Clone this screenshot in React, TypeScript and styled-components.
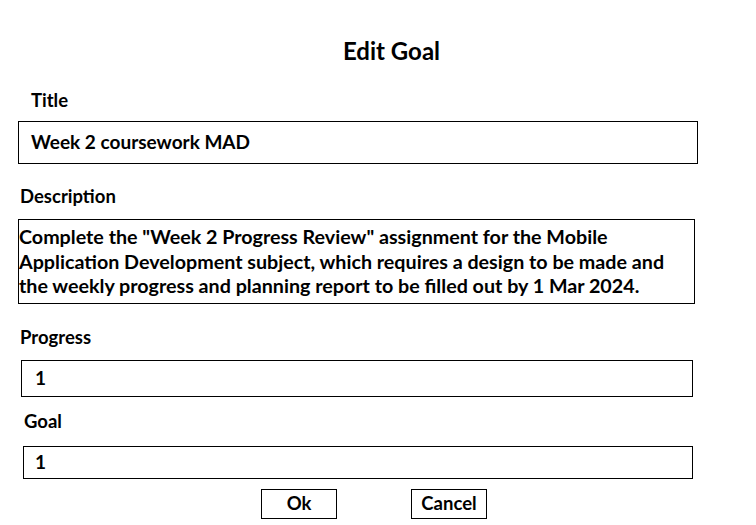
import React from "react";
import styled, { createGlobalStyle } from "styled-components";

const GlobalStyle = createGlobalStyle`
  html, body {
    margin: 0;
    padding: 0;
    background: #ffffff;
  }
  body {
    font-family: "Lato", "Noto Sans", sans-serif;
    font-weight: 700;
    color: #000000;
  }
`;

const Page = styled.div`
  width: 756px;
  height: 525px;
  box-sizing: border-box;
  padding-top: 36px;
  display: flex;
  flex-direction: column;
  overflow: hidden;
`;

const Heading = styled.h1`
  margin: 0;
  padding-left: 343px;
  font-size: 24px;
  line-height: 30px;
  font-weight: 700;
`;

const Label = styled.div<{ $indent: number; $gap: number }>`
  margin-top: ${(p) => p.$gap}px;
  padding-left: ${(p) => p.$indent}px;
  font-size: 18.5px;
  line-height: 22px;
`;

const Box = styled.div<{ $left: number; $width: number; $height: number; $gap: number; $pad: number }>`
  margin-top: ${(p) => p.$gap}px;
  margin-left: ${(p) => p.$left}px;
  width: ${(p) => p.$width}px;
  height: ${(p) => p.$height}px;
  box-sizing: border-box;
  border: 1px solid #000000;
  padding: 0 0 2px ${(p) => p.$pad}px;
  display: flex;
  align-items: center;
  font-size: 19px;
  line-height: 22px;
`;

const TextArea = styled.div`
  margin-top: 12px;
  margin-left: 18px;
  width: 677px;
  height: 85px;
  box-sizing: border-box;
  border: 1px solid #000000;
  padding: 5px 0 0 0;
  font-size: 19.7px;
  line-height: 24.5px;
  white-space: nowrap;
`;

const Line = styled.span`
  display: block;
`;

const ButtonRow = styled.div`
  margin-top: 10px;
  padding-left: 261px;
  display: flex;
  gap: 74px;
`;

const Button = styled.button`
  width: 76px;
  height: 30px;
  box-sizing: border-box;
  border: 1px solid #000000;
  background: #ffffff;
  border-radius: 0;
  padding: 0 0 3px 0;
  margin: 0;
  font-family: "Lato", "Noto Sans", sans-serif;
  font-weight: 700;
  font-size: 18.5px;
  line-height: 22px;
  color: #000000;
  display: flex;
  align-items: center;
  justify-content: center;
`;

const descriptionLines = [
  'Complete the "Week 2 Progress Review" assignment for the Mobile',
  "Application Development subject, which requires a design to be made and",
  "the weekly progress and planning report to be filled out by 1 Mar 2024.",
];

export default function App() {
  return (
    <>
      <GlobalStyle />
      <Page>
        <Heading>Edit Goal</Heading>

        <Label $indent={31} $gap={23}>Title</Label>
        <Box $left={18} $width={680} $height={43} $gap={10} $pad={12}>
          Week 2 coursework MAD
        </Box>

        <Label $indent={20} $gap={21}>Description</Label>
        <TextArea>
          {descriptionLines.map((l) => (
            <Line key={l}>{l}</Line>
          ))}
        </TextArea>

        <Label $indent={20} $gap={22}>Progress</Label>
        <Box $left={21} $width={672} $height={37} $gap={12} $pad={13}>
          1
        </Box>

        <Label $indent={24} $gap={13}>Goal</Label>
        <Box $left={23} $width={670} $height={33} $gap={14} $pad={11}>
          1
        </Box>

        <ButtonRow>
          <Button>Ok</Button>
          <Button>Cancel</Button>
        </ButtonRow>
      </Page>
    </>
  );
}
